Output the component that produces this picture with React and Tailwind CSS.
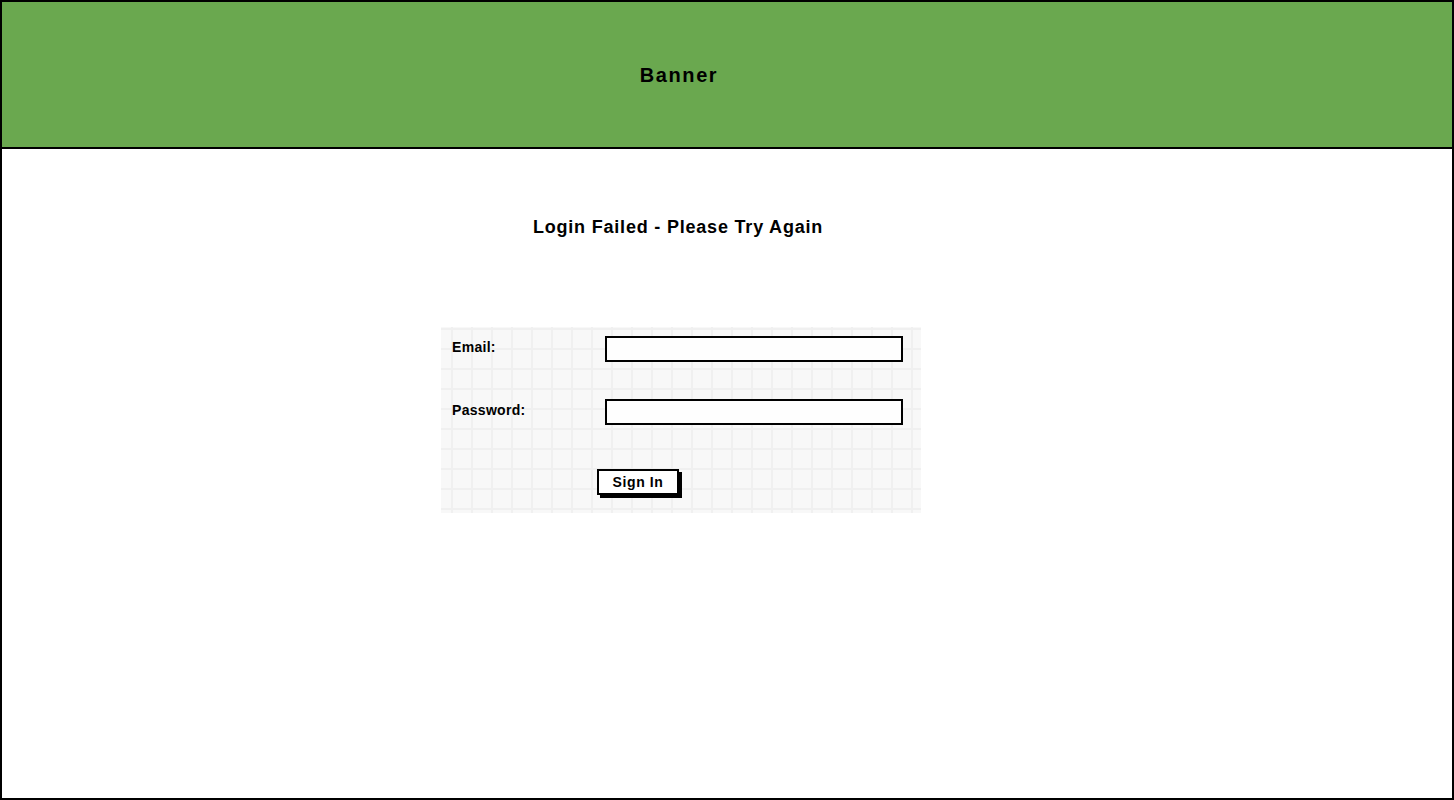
export default function App() {
  return (
    <div className="w-[1454px] h-[800px] border-2 border-black bg-white flex flex-col font-['Liberation_Sans',Arial,sans-serif] text-black overflow-hidden">
      {/* banner */}
      <div className="h-[147px] shrink-0 bg-[#6aa84f] border-b-2 border-black flex items-center justify-center pr-[96px]">
        <span className="text-[20px] font-bold tracking-[1.6px] leading-6">Banner</span>
      </div>

      {/* body */}
      <div className="flex flex-col">
        <h1 className="mt-[66px] w-[1352px] text-center text-[18px] leading-6 font-bold tracking-[0.8px]">
          Login Failed - Please Try Again
        </h1>

        <div className="mt-[88px] ml-[439px] w-[480px] h-[186px] bg-[#f8f8f8] bg-[linear-gradient(to_right,#f0f0f0_2px,transparent_2px),linear-gradient(to_bottom,#f0f0f0_2px,transparent_2px)] bg-[size:20px_20px] bg-[position:10px_1px] pt-[9px] pl-[11px]">
          <div className="flex items-center h-[26px]">
            <span className="w-[153px] text-[14px] font-bold tracking-[0.3px] -mt-[3px]">Email:</span>
            <div className="w-[298px] h-[26px] border-2 border-black bg-[#fefefe]" />
          </div>
          <div className="flex items-center h-[26px] mt-[37px]">
            <span className="w-[153px] text-[14px] font-bold tracking-[0.3px] -mt-[3px]">Password:</span>
            <div className="w-[298px] h-[26px] border-2 border-black bg-[#fefefe]" />
          </div>
          <div className="mt-[44px] pl-[145px]">
            <button className="w-[82px] h-[26px] border-2 border-black bg-white shadow-[3px_3px_0_#000] text-[14px] font-bold tracking-[0.6px] leading-none">
              Sign In
            </button>
          </div>
        </div>
      </div>
    </div>
  )
}
